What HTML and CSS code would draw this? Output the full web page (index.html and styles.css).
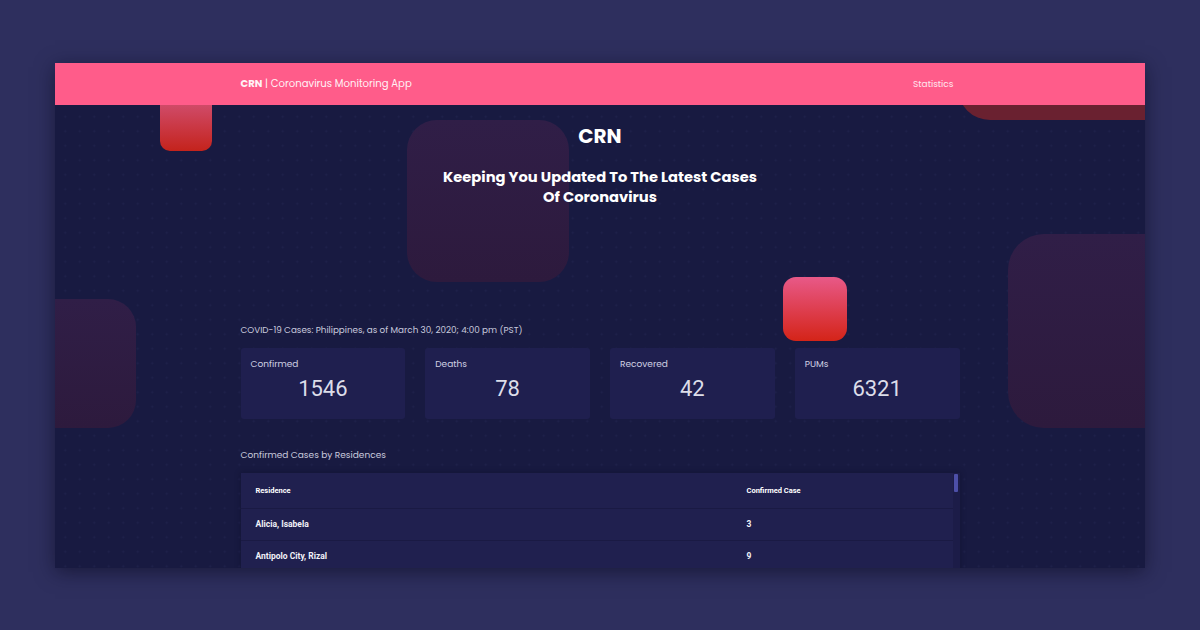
FILE: index.html
```html
<!DOCTYPE html>
<html lang="en">
<head>
<meta charset="utf-8">
<title>CRN | Coronavirus Monitoring App</title>
<link rel="stylesheet" href="styles.css">
</head>
<body>
<div class="frame">
  <div class="shape shape-corner"></div>
  <div class="shape shape-red-small"></div>
  <div class="shape shape-purple-big"></div>
  <div class="shape shape-red"></div>
  <div class="shape shape-purple-left"></div>
  <div class="shape shape-purple-right"></div>

  <header class="topbar">
    <div class="topbar-inner">
      <div class="brand"><b>CRN</b> | Coronavirus Monitoring App</div>
      <a class="nav-link">Statistics</a>
    </div>
  </header>

  <main class="content">
    <section class="hero">
      <h1 class="hero-title">CRN</h1>
      <p class="hero-sub">Keeping You Updated To The Latest Cases Of Coronavirus</p>
    </section>

    <p class="caption">COVID-19 Cases: Philippines, as of March 30, 2020; 4:00 pm (PST)</p>
    <div class="cards">
      <div class="card"><div class="card-label">Confirmed</div><div class="card-value">1546</div></div>
      <div class="card"><div class="card-label">Deaths</div><div class="card-value">78</div></div>
      <div class="card"><div class="card-label">Recovered</div><div class="card-value">42</div></div>
      <div class="card"><div class="card-label">PUMs</div><div class="card-value">6321</div></div>
    </div>

    <p class="caption caption-table">Confirmed Cases by Residences</p>
    <div class="table-wrap">
      <div class="table-scroll">
        <table class="res-table">
          <thead>
            <tr><th class="col-res">Residence</th><th>Confirmed Case</th></tr>
          </thead>
          <tbody>
            <tr><td>Alicia, Isabela</td><td>3</td></tr>
            <tr><td>Antipolo City, Rizal</td><td>9</td></tr>
          </tbody>
        </table>
      </div>
      <div class="scrollbar"><div class="scroll-thumb"></div></div>
    </div>
  </main>
</div>
</body>
</html>
```
FILE: styles.css
```css
* { box-sizing: border-box; }

html, body {
  margin: 0;
  padding: 0;
}

body {
  background: #2e2f5e;
  width: 1200px;
  height: 630px;
  overflow: hidden;
  font-family: "Poppins", "Inter", "Open Sans", sans-serif;
  padding-top: 63px;
}

.frame {
  position: relative;
  width: 1090px;
  height: 505px;
  margin: 0 auto;
  overflow: hidden;
  background-color: #181a41;
  background-image: radial-gradient(circle, rgba(60, 64, 120, 0.2) 0.8px, transparent 1.2px);
  background-size: 14.5px 14.5px;
  background-position: 3px 3px;
  box-shadow: 0 4px 18px rgba(10, 10, 30, 0.55);
}

/* decorative shapes */
.shape {
  position: absolute;
  z-index: 0;
}
.shape-corner {
  left: 903px;
  top: -40px;
  width: 260px;
  height: 97px;
  border-radius: 32px;
  background: #6a2130;
}
.shape-red-small {
  left: 105px;
  top: 24px;
  width: 52px;
  height: 64px;
  border-radius: 10px;
  background: linear-gradient(180deg, #d45a86 0%, #c4231c 100%);
}
.shape-purple-big {
  left: 352px;
  top: 57px;
  width: 162px;
  height: 162px;
  border-radius: 30px;
  background: linear-gradient(180deg, #301e47 0%, #2d1a3d 100%);
}
.shape-red {
  left: 728px;
  top: 214px;
  width: 64px;
  height: 64px;
  border-radius: 13px;
  background: linear-gradient(180deg, #e85988 0%, #d42418 100%);
}
.shape-purple-left {
  left: -48px;
  top: 236px;
  width: 129px;
  height: 129px;
  border-radius: 28px;
  background: linear-gradient(180deg, #301e47 0%, #2d1a3d 100%);
}
.shape-purple-right {
  left: 953px;
  top: 171px;
  width: 194px;
  height: 194px;
  border-radius: 36px;
  background: linear-gradient(180deg, #301e47 0%, #2d1a3d 100%);
}

/* header */
.topbar {
  position: relative;
  z-index: 2;
  height: 42px;
  background: #ff5c8a;
}
.topbar-inner {
  width: 719px;
  height: 100%;
  margin: 0 auto;
  display: flex;
  align-items: center;
  justify-content: space-between;
  padding-right: 6px;
  color: #fff2f6;
}
.brand {
  font-size: 10.1px;
}
.brand b { font-weight: 700; }
.nav-link {
  font-size: 9px;
  color: #ffe6ee;
}

/* content */
.content {
  position: relative;
  z-index: 1;
  width: 719px;
  margin: 0 auto;
}

.hero {
  text-align: center;
  padding-top: 19px;
}
.hero-title {
  margin: 0;
  font-size: 20px;
  line-height: 24px;
  font-weight: 700;
  color: #ffffff;
}
.hero-sub {
  margin: 19px auto 0;
  width: 330px;
  font-size: 14.7px;
  line-height: 20px;
  font-weight: 700;
  color: #ffffff;
}

.caption {
  margin: 116px 0 0;
  font-size: 8.8px;
  line-height: 14px;
  color: #c9cade;
}

.cards {
  margin-top: 11px;
  display: grid;
  grid-template-columns: repeat(4, 1fr);
  gap: 20px;
}
.card {
  height: 71px;
  background: #1f1f4f;
  border-radius: 3px;
  padding: 9px 10px 0;
}
.card-label {
  font-size: 9px;
  line-height: 14px;
  color: #cfd0e2;
}
.card-value {
  margin-top: 5px;
  text-align: center;
  font-family: "Roboto", "Inter", sans-serif;
  font-size: 22px;
  line-height: 26px;
  font-weight: 400;
  color: #dcdde9;
}

.caption-table {
  margin-top: 29px;
  font-size: 9px;
}

.table-wrap {
  margin-top: 11px;
  display: flex;
  background: #20204f;
  height: 100px;
  box-shadow: 0 0 6px rgba(10, 10, 30, 0.35);
}
.table-scroll {
  flex: 1;
}
.scrollbar {
  width: 7px;
  padding: 1px 1px 0 1px;
  background: #1c1c48;
}
.scroll-thumb {
  width: 4px;
  height: 18px;
  background: #4d4fa8;
  border-radius: 1px;
}
.res-table {
  width: 100%;
  border-collapse: collapse;
  font-family: "Roboto", "Inter", sans-serif;
  color: #ffffff;
}
.res-table th,
.res-table td {
  text-align: left;
  padding: 0 15px;
  border-bottom: 1px solid #1a1a44;
}
.res-table th {
  height: 35px;
  font-size: 7.5px;
  font-weight: 700;
}
.res-table td {
  height: 32px;
  font-size: 8.5px;
  font-weight: 700;
  color: #f2f2f8;
}
.res-table .col-res {
  width: 491px;
}
```
